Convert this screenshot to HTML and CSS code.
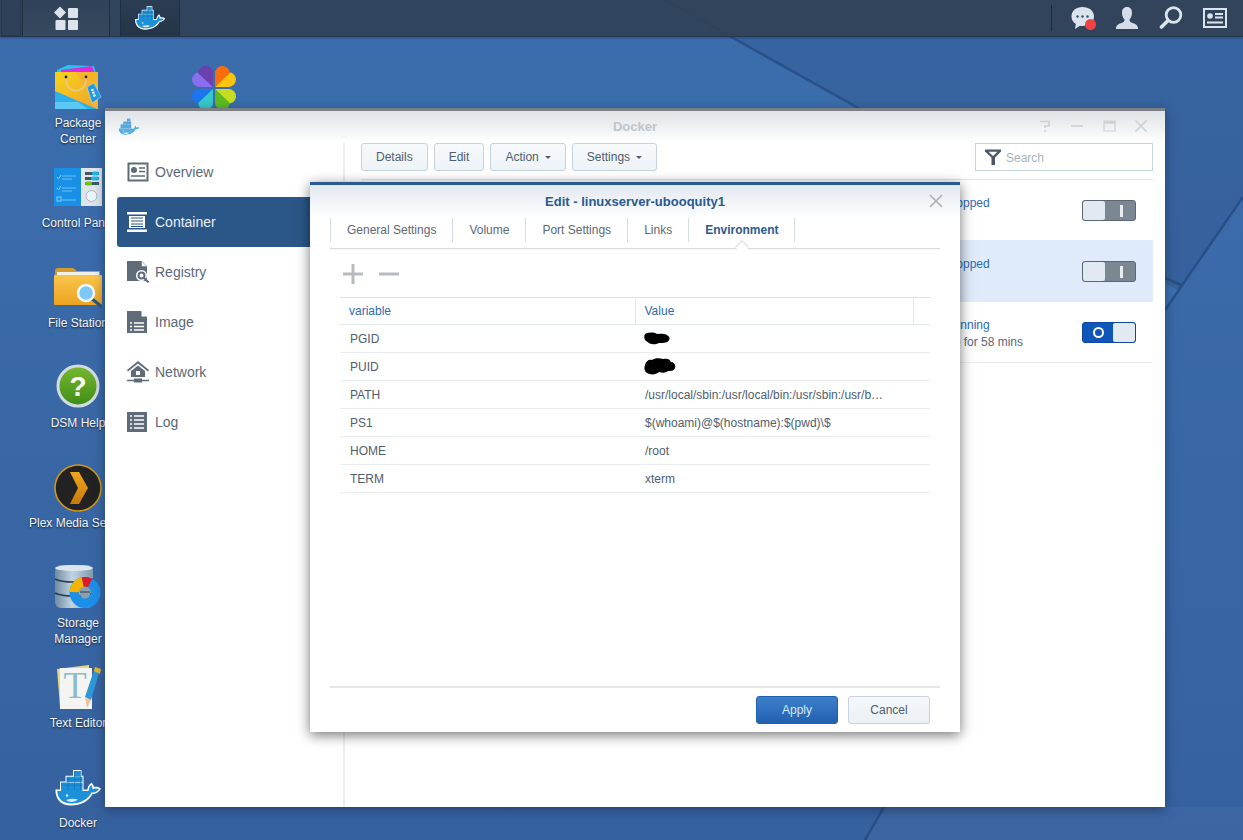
FILE: index.html
```html
<!DOCTYPE html>
<html lang="en">
<head>
<meta charset="utf-8">
<title>Docker - DSM</title>
<link rel="stylesheet" href="styles.css">
</head>
<body>
<svg class="defs" width="0" height="0" aria-hidden="true">
  <defs>
    <linearGradient id="bagY" x1="0" y1="0" x2="1" y2="1"><stop offset="0" stop-color="#f7d31c"/><stop offset="1" stop-color="#f2a22b"/></linearGradient>
    <linearGradient id="fold" x1="0" y1="0" x2="0" y2="1"><stop offset="0" stop-color="#f8c64c"/><stop offset="1" stop-color="#eda321"/></linearGradient>
    <linearGradient id="grn" x1="0" y1="0" x2="0" y2="1"><stop offset="0" stop-color="#77b82f"/><stop offset="1" stop-color="#3f8d16"/></linearGradient>
    <linearGradient id="cyl" x1="0" y1="0" x2="1" y2="0"><stop offset="0" stop-color="#6d8ba3"/><stop offset=".45" stop-color="#c3d4e0"/><stop offset="1" stop-color="#7f9bb0"/></linearGradient>
    <linearGradient id="chev" x1="0" y1="0" x2="0" y2="1"><stop offset="0" stop-color="#f0a51e"/><stop offset="1" stop-color="#c87a0c"/></linearGradient>
    <symbol id="whale" viewBox="0 0 48 36">
      <path d="M7 12.5 H28.5 V19.800 H7 Z M12.500 6.800 H28.500 V12 H12.500 Z M20 1 H26.500 V6.500 H20 Z" fill="#fff" stroke="#fff" stroke-width="2"/>
      <path d="M1.500 19.500 H33.500 C34 15 36.500 13.500 37.800 12.500 C39 14.500 39.800 15.800 40 17 C42.500 16.500 45 16.800 47 18.500 C45 22.500 41.500 24 38.500 24 C35 31 27 35.500 17 35.500 C6 35.500 1 28 1.500 19.500 Z" fill="#fff"/>
      <path d="M3.300 21 H34.500 C35 17.500 36.200 16 37.300 15 C38 16.500 38.600 18 38.600 19.200 C40.800 18.300 43 18.400 44.800 19.300 C43 21.800 40.200 22.800 37.500 22.600 C34.200 29.500 26.500 33.500 17.500 33.500 C8.500 33.500 3.300 28 3.300 21 Z" fill="#1c90d8"/>
      <path d="M7 12.500 H28.500 V21 H7 Z M12.500 6.800 H28.500 V12 H12.500 Z M20 1 H26.500 V6.500 H20 Z" fill="#1c90d8"/>
      <path d="M7 15.200 H28.500 M12.500 9.400 H28.500 M14 7 V20 M20.500 1 V20 M26.500 1 V20" stroke="#0f6fae" stroke-width=".5" fill="none"/>
      <path d="M12 30 C16 28.500 20 28.500 24 29.500 C21 32.500 15 32.800 12 30 Z" fill="#cfeaf8"/>
      <circle cx="13" cy="25.500" r="1.200" fill="#e8f6fd"/>
    </symbol>
  </defs>
</svg>

<div class="desktop">
  <svg class="wallpaper" viewBox="0 0 1243 840" aria-hidden="true">
    <path d="M665 0 H1243 V197 L1166 308 L1165 278 V108 H860 Z" class="wp-shade"/>
    <path d="M884 807 H1243 V840 H865 Z" class="wp-lift"/>
    <path d="M1165 283 L1178 290 L1165 310 Z" class="wp-patch"/>
    <path d="M665 0 L860 109" class="wp-line"/>
    <path d="M1243 197 L1165 310" class="wp-line"/>
    <path d="M1165 278 L1181 285" class="wp-line"/>
    <path d="M884 807 L865 840" class="wp-line"/>
  </svg>

  <header class="taskbar">
    <div class="tb-stub"></div>
    <button class="tb-btn tb-start" aria-label="Main menu">
      <svg width="26" height="24" viewBox="0 0 26 24">
        <path d="M7 0.500 L13 6.500 L7 12.500 L1 6.500 Z" fill="#dde3ea"/>
        <rect x="15" y="2" width="10" height="10" rx="1" fill="#dde3ea"/>
        <rect x="2.500" y="14" width="10" height="10" rx="1" fill="#dde3ea"/>
        <rect x="15" y="14" width="10" height="10" rx="1" fill="#dde3ea"/>
      </svg>
    </button>
    <button class="tb-btn tb-app" aria-label="Docker">
      <svg width="32" height="24"><use href="#whale"/></svg>
    </button>
    <div class="tb-spacer"></div>
    <div class="tb-sep"></div>
    <div class="tb-icons">
      <span class="tb-icon chat">
        <svg width="24" height="24" viewBox="0 0 24 24">
          <path d="M11.500 1 C18 1 23 4.800 23 10.500 C23 16 18 20 11.500 20 C10.500 20 9.700 20 9 19.800 L4 23 L4.800 18 C2 16.300 0.500 13.700 0.500 10.500 C0.500 4.800 5 1 11.500 1 Z" fill="#dbe3ec"/>
          <circle cx="6.500" cy="10.500" r="1.200" fill="#3a4e68"/><circle cx="11.500" cy="10.500" r="1.200" fill="#3a4e68"/><circle cx="16.500" cy="10.500" r="1.200" fill="#3a4e68"/>
        </svg>
        <span class="badge"></span>
      </span>
      <svg class="tb-icon" width="24" height="24" viewBox="0 0 24 24">
        <path d="M12 1 C15.500 1 17 3.500 17 7 C17 10 15.500 12.500 14.500 13.500 C14.500 15 15 16 17 16.800 C20 18 22.500 18.800 23 22 V23 H1 V22 C1.500 18.800 4 18 7 16.800 C9 16 9.500 15 9.500 13.500 C8.500 12.500 7 10 7 7 C7 3.500 8.500 1 12 1 Z" fill="#d5deE8"/>
      </svg>
      <svg class="tb-icon" width="24" height="24" viewBox="0 0 24 24">
        <circle cx="14.500" cy="9" r="7.300" fill="none" stroke="#dbe3ec" stroke-width="2.800"/>
        <path d="M9 14.500 L2.500 21" stroke="#dbe3ec" stroke-width="3.600" stroke-linecap="round"/>
      </svg>
      <svg class="tb-icon" width="24" height="20" viewBox="0 0 24 20">
        <rect x="1" y="1" width="22" height="18" fill="none" stroke="#dbe3ec" stroke-width="2"/>
        <circle cx="7" cy="8" r="2.800" fill="#dbe3ec"/>
        <path d="M12 6 H20 M12 9.500 H20 M4 14.500 H20" stroke="#dbe3ec" stroke-width="2"/>
      </svg>
    </div>
  </header>

  <nav class="shortcuts">
    <a class="shortcut">
      <span class="sc-icon">
        <svg width="48" height="48" viewBox="0 0 48 48">
          <path d="M3 6 L14 1 L40 2 L42 9 H3 Z" fill="#2bc0ee"/>
          <path d="M7 6 L38 2 L40 8 H7 Z" fill="#e02adf"/>
          <rect x="1" y="8" width="43" height="37" fill="url(#bagY)"/>
          <path d="M22 8 H44 V45 H40 Z" fill="#f5b42a"/>
          <path d="M1 27 L43 45 H1 Z" fill="#2eb0ee"/>
          <path d="M1 38 L24 38 L34 45 H1 Z" fill="#5cc8f4"/>
          <path d="M12 14 C11 31 33 31 32 14" fill="none" stroke="#e9c98b" stroke-width="1.600"/>
          <circle cx="12" cy="13" r="1.400" fill="#222"/><circle cx="32" cy="13" r="1.400" fill="#222"/>
          <path d="M33 23 L40 19 L47 33 L38 39 Z" fill="#1f9ae0" stroke="#cfeaf8" stroke-width=".5"/>
          <path d="M38 25 L41 33" stroke="#fff" stroke-width="2.500" stroke-dasharray="2 1"/>
        </svg>
      </span>
      <span class="sc-label">Package<br>Center</span>
    </a>
    <a class="shortcut">
      <span class="sc-icon">
        <svg width="48" height="48" viewBox="0 0 48 48">
          <rect y="4" width="27" height="38" fill="#1a8fe6"/>
          <rect x="27" y="4" width="21" height="38" fill="#dfe5ea"/>
          <path d="M8 12 H22 M8 15 H18 M8 24 H22 M8 27 H18 M8 36 H22" stroke="#68c6f6" stroke-width="1.200"/>
          <path d="M3 13 L4.500 15 L7 11 M3 24 L4.500 26 L7 22" stroke="#7ed4f8" stroke-width="1" fill="none"/>
          <rect x="3" y="33" width="4" height="4" fill="none" stroke="#7ed4f8"/>
          <rect x="31" y="8" width="14" height="3" fill="#435663"/><rect x="38" y="7.500" width="7" height="4" rx="2" fill="#19b8ef"/>
          <rect x="31" y="13" width="14" height="3" fill="#435663"/><rect x="37" y="12.500" width="8" height="4" rx="2" fill="#19b8ef"/>
          <rect x="31" y="18" width="14" height="3" fill="#435663"/><rect x="31" y="17.500" width="7" height="4" rx="2" fill="#6cc617"/>
          <circle cx="37.500" cy="32" r="5.500" fill="#eaf4fb" stroke="#aab5be"/>
        </svg>
      </span>
      <span class="sc-label">Control Panel</span>
    </a>
    <a class="shortcut">
      <span class="sc-icon">
        <svg width="48" height="48" viewBox="0 0 48 48">
          <path d="M1 7 C1 5 2 4 4 4 H19 L23 7 H46 V20 H1 Z" fill="#d39a2e"/>
          <rect x="3" y="8" width="42" height="3" fill="#f0efe8"/>
          <rect y="11" width="48" height="30" rx="1" fill="url(#fold)"/>
          <path d="M37 34 L48 43" stroke="#25587f" stroke-width="3"/>
          <circle cx="32" cy="29" r="8" fill="#7cc9f8" stroke="#f4f7f9" stroke-width="2.500"/>
        </svg>
      </span>
      <span class="sc-label">File Station</span>
    </a>
    <a class="shortcut">
      <span class="sc-icon sc-help">
        <svg width="48" height="48" viewBox="0 0 48 48">
          <circle cx="24" cy="24" r="20" fill="url(#grn)" stroke="#d2dae2" stroke-width="3"/>
          <text x="24" y="34" class="help-mark">?</text>
        </svg>
      </span>
      <span class="sc-label">DSM Help</span>
    </a>
    <a class="shortcut">
      <span class="sc-icon">
        <svg width="48" height="48" viewBox="0 0 48 48">
          <circle cx="24" cy="24" r="23" fill="#222" stroke="#d69513" stroke-width="1.600"/>
          <path d="M16 8 H25 L34 24 L25 40 H16 L24 24 Z" fill="url(#chev)"/>
        </svg>
      </span>
      <span class="sc-label">Plex Media Server</span>
    </a>
    <a class="shortcut">
      <span class="sc-icon">
        <svg width="48" height="48" viewBox="0 0 48 48">
          <rect x="1" y="1" width="38" height="43" rx="6" fill="url(#cyl)"/>
          <ellipse cx="20" cy="4" rx="19" ry="3" fill="#dbe6ee"/>
          <path d="M1 15 C8 19 32 19 39 15 M1 29 C8 33 32 33 39 29" stroke="#2d3f4f" stroke-width="1.600" fill="none"/>
          <circle cx="31" cy="28.500" r="5.500" fill="#8a9fb0"/>
          <path d="M26 28 H36" stroke="#2d3f4f" stroke-width="1"/>
          <circle cx="31" cy="28.500" r="10.750" fill="none" stroke="#1c8fe8" stroke-width="9.500"/>
          <path d="M20.300 28.100 A10.750 10.750 0 0 1 28.800 18" fill="none" stroke="#f5b400" stroke-width="9.500"/>
          <path d="M28.800 18 A10.750 10.750 0 0 1 36 19" fill="none" stroke="#e11a2b" stroke-width="9.500"/>
        </svg>
      </span>
      <span class="sc-label">Storage<br>Manager</span>
    </a>
    <a class="shortcut">
      <span class="sc-icon">
        <svg width="48" height="48" viewBox="0 0 48 48">
          <path d="M3 5 L35 1 V40 L6 43 Z" fill="#e6d78b"/>
          <rect x="6" y="4" width="32" height="41" fill="#f4f4f2"/>
          <text x="21" y="34" class="editor-mark">T</text>
          <path d="M41 3 L46 5.500 L37 36 L31 33 Z" fill="#2e97d6"/>
          <path d="M41 3 L47 5 L46 10 L40 7 Z" fill="#efb324"/>
          <path d="M31 33 L37 36 L33 44 Z" fill="#eec49a"/>
        </svg>
      </span>
      <span class="sc-label">Text Editor</span>
    </a>
    <a class="shortcut">
      <span class="sc-icon">
        <svg width="48" height="36"><use href="#whale"/></svg>
      </span>
      <span class="sc-label">Docker</span>
    </a>
    <a class="shortcut shortcut-photo">
      <span class="sc-icon">
        <svg width="44" height="44" viewBox="0 0 42 42">
          <path d="M20 20 H7 a7 7 0 0 1 0 -14 Z" fill="#8a6ef0"/>
          <path d="M20 20 V7 a7 7 0 0 0 -14 0 Z" fill="#6a3fb0"/>
          <path d="M22 20 H35 a7 7 0 0 0 0 -14 Z" fill="#fdc40f"/>
          <path d="M22 20 V7 a7 7 0 0 1 14 0 Z" fill="#fb6d0c"/>
          <path d="M20 22 H7 a7 7 0 0 0 0 14 Z" fill="#1b76ef"/>
          <path d="M20 22 V35 a7 7 0 0 1 -14 0 Z" fill="#36c9c9"/>
          <path d="M22 22 H35 a7 7 0 0 1 0 14 Z" fill="#c6dd22"/>
          <path d="M22 22 V35 a7 7 0 0 0 14 0 Z" fill="#5cbb21"/>
        </svg>
      </span>
    </a>
  </nav>

  <section class="window">
    <div class="win-head">
      <svg class="win-logo" width="24" height="18"><use href="#whale"/></svg>
      <span class="win-title">Docker</span>
      <div class="win-controls">
        <svg width="14" height="14" viewBox="0 0 14 14"><path d="M2 2.500 H11 V7 H7 V9 M7 11 V13" fill="none" stroke="#ccd0d4" stroke-width="1.600"/></svg>
        <svg width="14" height="14" viewBox="0 0 14 14"><path d="M1 7 H13" stroke="#ccd0d4" stroke-width="1.600"/></svg>
        <svg width="14" height="14" viewBox="0 0 14 14"><path d="M2 2 H13 V12 H2 Z" fill="none" stroke="#ccd0d4" stroke-width="1.200"/><path d="M2 3.500 H13" stroke="#ccd0d4" stroke-width="2.400"/></svg>
        <svg width="14" height="14" viewBox="0 0 14 14"><path d="M1.500 1.500 L12.500 12.500 M12.500 1.500 L1.500 12.500" stroke="#ccd0d4" stroke-width="1.500"/></svg>
      </div>
    </div>
    <div class="win-body">
      <aside class="sidebar">
        <a class="side-item">
          <svg class="side-icon" width="22" height="20" viewBox="0 0 22 20"><rect x=".5" y=".5" width="21" height="19" fill="#5f6b78"/><rect x="2.500" y="2.500" width="17" height="15" fill="#fff"/><circle cx="7" cy="8" r="3" fill="#5f6b78"/><path d="M12 6 H18 M12 9.500 H18 M4 14 H18" stroke="#5f6b78" stroke-width="1.600"/></svg>
          <span>Overview</span>
        </a>
        <a class="side-item active">
          <svg class="side-icon" width="20" height="20" viewBox="0 0 20 20"><path d="M0 0 H20 V2.500 H0 Z M0 17.500 H20 V20 H0 Z M2 4 H18 V16 H2 Z" fill="#fff"/><path d="M4 6 H16 M4 9 H16 M4 12 H16 M4 14.500 H16" stroke="#2a5788" stroke-width="1"/></svg>
          <span>Container</span>
        </a>
        <a class="side-item">
          <svg class="side-icon" width="22" height="22" viewBox="0 0 22 22"><path d="M0 0 H14 L20 6 V20 H0 Z" fill="#5f6b78"/><path d="M14.500 0 L20 5.500 H14.500 Z" fill="#fff" stroke="#5f6b78" stroke-width=".5"/><circle cx="14.500" cy="14.500" r="5.500" fill="#fff"/><circle cx="14.500" cy="14.500" r="3" fill="none" stroke="#5f6b78" stroke-width="2"/><path d="M17 17 L21.500 21.500" stroke="#5f6b78" stroke-width="2"/></svg>
          <span>Registry</span>
        </a>
        <a class="side-item">
          <svg class="side-icon" width="20" height="22" viewBox="0 0 20 22"><path d="M0 0 H14 L20 6 V22 H0 Z" fill="#5f6b78"/><path d="M14.500 0 L20 5.500 H14.500 Z" fill="#fff"/><path d="M3 12 H5 M7 12 H17 M3 15.500 H5 M7 15.500 H17 M3 19 H5 M7 19 H17" stroke="#fff" stroke-width="1.600"/></svg>
          <span>Image</span>
        </a>
        <a class="side-item">
          <svg class="side-icon" width="22" height="22" viewBox="0 0 22 22"><path d="M11 0 L22 9 L21 10.500 L11 2.500 L1 10.500 L0 9 Z" fill="#5f6b78"/><path d="M4 10 L11 4.500 L18 10 V16 H4 Z" fill="#5f6b78"/><rect x="9" y="10" width="4" height="4" fill="#fff"/><path d="M0 19.500 H7 M15 19.500 H22" stroke="#5f6b78" stroke-width="1.600"/><rect x="7" y="17.500" width="8" height="4" fill="#5f6b78"/></svg>
          <span>Network</span>
        </a>
        <a class="side-item">
          <svg class="side-icon" width="20" height="20" viewBox="0 0 20 20"><rect width="20" height="20" fill="#5f6b78"/><path d="M3 4 H5 M7 4 H17 M3 8 H5 M7 8 H17 M3 12 H5 M7 12 H17 M3 16 H5 M7 16 H17" stroke="#fff" stroke-width="1.600"/></svg>
          <span>Log</span>
        </a>
      </aside>
      <main class="content">
        <div class="toolbar">
          <button class="btn">Details</button>
          <button class="btn">Edit</button>
          <button class="btn">Action<i class="caret"></i></button>
          <button class="btn">Settings<i class="caret"></i></button>
          <label class="search">
            <svg width="16" height="16" viewBox="0 0 16 16"><path d="M0 0.500 H16 V2.500 L10 8.500 V16 H6.500 V8.500 L0 2.500 Z" fill="#4b5765"/><path d="M3.500 2.800 H12.500 L8 7 Z" fill="#fff"/></svg>
            <span>Search</span>
          </label>
        </div>
        <div class="rows">
          <div class="row">
            <div class="status"><span class="st-name">Stopped</span></div>
            <div class="toggle off"><span class="knob"></span><span class="mark-i"></span></div>
          </div>
          <div class="row selected">
            <div class="status"><span class="st-name">Stopped</span></div>
            <div class="toggle off"><span class="knob"></span><span class="mark-i"></span></div>
          </div>
          <div class="row last">
            <div class="status"><span class="st-name">Running</span><span class="st-time">Up for 58 mins</span></div>
            <div class="toggle on"><span class="mark-o"></span><span class="knob"></span></div>
          </div>
        </div>
      </main>
    </div>
  </section>

  <section class="modal">
    <div class="modal-head">
      <h1>Edit - linuxserver-ubooquity1</h1>
      <svg class="modal-close" width="14" height="14" viewBox="0 0 14 14"><path d="M1 1 L13 13 M13 1 L1 13" stroke="#aab0b6" stroke-width="1.700"/></svg>
    </div>
    <div class="tabs">
      <a class="tab">General Settings</a>
      <a class="tab">Volume</a>
      <a class="tab">Port Settings</a>
      <a class="tab">Links</a>
      <a class="tab current">Environment</a>
    </div>
    <div class="tools">
      <svg width="20" height="20" viewBox="0 0 20 20"><path d="M8.500 0 H11.500 V8.500 H20 V11.500 H11.500 V20 H8.500 V11.500 H0 V8.500 H8.500 Z" fill="#b7bbc0"/></svg>
      <svg width="20" height="20" viewBox="0 0 20 20"><rect y="8.500" width="20" height="3" fill="#b7bbc0"/></svg>
    </div>
    <div class="table-wrap">
      <table class="env">
        <colgroup><col class="c1"><col class="c2"><col class="c3"></colgroup>
        <thead><tr><th>variable</th><th>Value</th><th></th></tr></thead>
        <tbody>
          <tr><td>PGID</td><td colspan="2"><svg class="scrib" width="26" height="13" viewBox="0 0 26 13"><path d="M0.500 3 C2 0 10 0 13 2 C18 1 25 2 25.500 6 C26 11 19 11 15 11 C10 13.500 5 12 3 9.500 C0 8 0 5 0.500 3 Z" fill="#000"/></svg></td></tr>
          <tr><td>PUID</td><td colspan="2"><svg class="scrib" width="32" height="17" viewBox="0 0 32 17"><path d="M1 7 C2 3 5 1 8 2 C11 -0.500 16 0 19 1 C23 0 26 1 27 4 C30 4 32 7 31 10 C30 13 27 13 24 13 C22 15 18 15 15 14 C12 17 6 17 3 15 C0 13 0 10 1 7 Z" fill="#000"/></svg></td></tr>
          <tr><td>PATH</td><td colspan="2">/usr/local/sbin:/usr/local/bin:/usr/sbin:/usr/b…</td></tr>
          <tr><td>PS1</td><td colspan="2">$(whoami)@$(hostname):$(pwd)\$</td></tr>
          <tr><td>HOME</td><td colspan="2">/root</td></tr>
          <tr><td>TERM</td><td colspan="2">xterm</td></tr>
        </tbody>
      </table>
    </div>
    <div class="modal-foot">
      <button class="fbtn primary">Apply</button>
      <button class="fbtn">Cancel</button>
    </div>
  </section>
</div>
</body>
</html>
```

FILE: styles.css
```css
* { box-sizing: border-box; }
html, body { margin: 0; padding: 0; }
body { font-family: "Liberation Sans", Arial, sans-serif; font-size: 12px; color: #505d6d; overflow: hidden; }
button { font-family: inherit; }
.defs { position: absolute; }

.desktop {
  position: relative;
  width: 1243px;
  height: 840px;
  overflow: hidden;
  background-color: #3a69a8;
  background-image: linear-gradient(180deg, #3b6dad 0%, #3a69a8 40%, #36619f 100%);
}
.wallpaper { position: absolute; inset: 0; width: 1243px; height: 840px; }
.wp-shade { fill: rgba(40, 60, 100, .18); }
.wp-lift { fill: rgba(255, 255, 255, .03); }
.wp-patch { fill: #3d70b0; }
.wp-line { fill: none; stroke: rgba(30, 65, 115, .6); stroke-width: 2.500; }

/* taskbar */
.taskbar {
  position: relative;
  display: flex;
  align-items: stretch;
  height: 37px;
  background: rgba(49, 65, 86, .92);
  border-bottom: 1px solid #26384f;
  box-shadow: 0 1px 2px rgba(20, 40, 70, .4);
}
.tb-stub { width: 20px; margin: 0 1px; background: #2e4159; border: 1px solid #26374c; border-top: 0; }
.tb-btn { padding: 0; border: 0; display: flex; align-items: center; justify-content: center; cursor: pointer; }
.tb-start { width: 88px; background: linear-gradient(180deg, #2f4259, #36495f); border-left: 1px solid #1f2e40; border-right: 1px solid #1f2e40; }
.tb-app { width: 60px; margin-left: 10px; background: linear-gradient(180deg, #2b3d54, #243448); border-left: 1px solid #1f2e40; border-right: 1px solid #1f2e40; }
.tb-spacer { flex: 1; }
.tb-sep { width: 1px; margin: 5px 0; background: #1d2b3c; }
.tb-icons { display: flex; align-items: center; gap: 20px; padding: 0 16px 0 19px; }
.tb-icon { position: relative; display: block; width: 24px; height: 24px; }
.badge { position: absolute; right: -1px; bottom: 0; width: 11px; height: 11px; border-radius: 50%; background: #f04343; }

/* desktop shortcuts */
.shortcuts {
  position: absolute;
  left: 18px;
  top: 50px;
  display: grid;
  grid-template-columns: 120px 120px;
  grid-template-rows: repeat(8, 100px);
  grid-auto-flow: column;
  column-gap: 16px;
}
.shortcut { display: flex; flex-direction: column; align-items: center; padding-top: 14px; }
.shortcut-photo { grid-column: 2; grid-row: 1; }
.sc-icon { display: flex; align-items: center; justify-content: center; height: 48px; }
.sc-help { margin-top: -2px; margin-bottom: 2px; }
.sc-label {
  margin-top: 3px;
  color: #f2f5f8;
  font-size: 12px;
  line-height: 16px;
  text-align: center;
  white-space: nowrap;
  text-shadow: 0 1px 2px rgba(0, 0, 0, .7);
}
.help-mark { font-family: "Liberation Sans", Arial, sans-serif; font-weight: 700; font-size: 28px; fill: #fff; text-anchor: middle; }
.editor-mark { font-family: "Liberation Serif", serif; font-size: 38px; fill: #8fbccd; text-anchor: middle; }

/* app window */
.window {
  position: absolute;
  left: 105px;
  top: 108px;
  width: 1060px;
  height: 699px;
  display: flex;
  flex-direction: column;
  background: #fff;
  border-top: 3px solid #7a8086;
  box-shadow: 0 3px 10px rgba(20, 40, 70, .55);
}
.win-head {
  position: relative;
  display: flex;
  align-items: center;
  justify-content: center;
  height: 32px;
  flex: none;
  padding-bottom: 2px;
  background: linear-gradient(180deg, #dfe2e6, #fff);
}
.win-logo { position: absolute; left: 12px; top: 7px; opacity: .7; }
.win-title { color: #c0c5ca; font-weight: 700; font-size: 13px; }
.win-controls { position: absolute; right: 17px; top: 8px; display: flex; gap: 18px; }
.win-body { display: flex; flex: 1; min-height: 0; }
.sidebar { width: 240px; padding: 4px 12px 0; border-right: 2px solid #eceef0; flex: none; }
.side-item {
  position: relative;
  display: flex;
  align-items: center;
  height: 50px;
  padding-left: 38px;
  font-size: 14px;
  color: #5c6875;
  border-radius: 3px;
}
.side-item.active { background: #2a5788; color: #e9eff6; }
.side-icon { position: absolute; left: 10px; top: 50%; transform: translateY(-50%); }
.content { flex: 1; padding: 0 12px 0 16px; min-width: 0; }
.toolbar { display: flex; align-items: flex-start; gap: 6px; height: 37px; border-bottom: 1px solid #dfe4ea; }
.btn {
  height: 28px;
  padding: 0 14px;
  border: 1px solid #c6d2de;
  border-radius: 3px;
  background: linear-gradient(180deg, #f7fafc, #eef3f8);
  color: #505d6d;
  font-size: 12px;
  line-height: 26px;
}
.caret { display: inline-block; margin-left: 6px; vertical-align: 2px; border: 3px solid transparent; border-top-color: #505d6d; border-bottom: 0; width: 0; height: 0; border-left-width: 3.500px; border-right-width: 3.500px; }
.search {
  display: flex;
  align-items: center;
  gap: 5px;
  width: 178px;
  height: 28px;
  margin-left: auto;
  padding-left: 9px;
  border: 1px solid #c6d2de;
  color: #a9b4c0;
}
.search span { padding-top: 2px; }
.rows { display: flex; flex-direction: column; }
.row {
  display: flex;
  align-items: flex-start;
  height: 60px;
  padding-left: 584px;
}
.row.selected { background: #dfeafa; height: 62px; padding-top: 1px; }
.row.last { height: 61px; border-bottom: 1px solid #eceff2; }
.status { width: 137px; display: flex; flex-direction: column; padding-top: 15px; line-height: 16px; }
.st-name { color: #2e6cb0; margin-bottom: 0; }
.st-time { color: #5c6875; margin-top: 1px; }
.toggle {
  display: flex;
  width: 54px;
  height: 21px;
  margin-top: 20px;
  border-radius: 3px;
  overflow: hidden;
  align-items: center;
}
.toggle.off { background: #7b8792; border: 1px solid #5b6670; }
.toggle.on { background: #0f56b9; border: 1px solid #0f47a0; justify-content: space-between; }
.knob { width: 22px; height: 19px; background: #e3e9f1; border-radius: 2px; flex: none; }
.mark-i { width: 3px; height: 12px; margin-left: 15px; background: #e9edf1; }
.mark-o { width: 11px; height: 11px; margin-left: 10px; border: 2px solid #fff; border-radius: 50%; }

/* modal dialog */
.modal {
  position: absolute;
  left: 310px;
  top: 182px;
  width: 650px;
  height: 550px;
  display: flex;
  flex-direction: column;
  background: #fff;
  border-top: 3px solid #2a5a8f;
  box-shadow: 0 3px 12px rgba(0, 0, 0, .55);
}
.modal-head {
  position: relative;
  height: 33px;
  flex: none;
  display: flex;
  align-items: center;
  justify-content: center;
  background: linear-gradient(180deg, #e2e8f0, #fff);
}
.modal-head h1 { margin: 0; font-size: 13px; font-weight: 700; color: #2a5a8f; }
.modal-close { position: absolute; right: 17px; top: 9px; }
.tabs {
  position: relative;
  display: flex;
  height: 31px;
  margin: 0 20px;
  padding-bottom: 6px;
  border-bottom: 1px solid #d9dcdf;
  box-shadow: 0 1px 1px rgba(0, 0, 0, .03);
  flex: none;
}
.tab {
  position: relative;
  display: flex;
  align-items: center;
  padding: 0 16px;
  border-left: 1px solid #d3dde7;
  color: #5c6875;
}
.tab.current { color: #2a5a8f; font-weight: 700; border-right: 1px solid #d3dde7; }
.tab.current::after {
  content: "";
  position: absolute;
  left: 50%;
  bottom: -10px;
  width: 9px;
  height: 9px;
  margin-left: -5px;
  background: #fff;
  border-left: 1px solid #d9dcdf;
  border-top: 1px solid #d9dcdf;
  transform: rotate(45deg);
}
.tools { display: flex; gap: 16px; padding: 15px 33px 0; height: 48px; flex: none; }
.table-wrap { flex: 1; margin: 0 30px; min-height: 0; }
.env { width: 590px; border-collapse: collapse; table-layout: fixed; }
.c1 { width: 295px; }
.c2 { width: 278px; }
.c3 { width: 17px; }
.env th {
  height: 27px;
  padding: 0 8px 0 9px;
  text-align: left;
  font-weight: 400;
  color: #2e6cb0;
  border-top: 1px solid #d8e0e8;
  border-bottom: 1px solid #e3e9ef;
  border-right: 1px solid #e3e9ef;
}
.env th:last-child { border-right: 0; }
.env td {
  height: 28px;
  padding: 0 10px;
  border-bottom: 1px solid #e9edf1;
  color: #505d6d;
  white-space: nowrap;
}
.scrib { display: block; margin-left: -1px; }
.modal-foot {
  display: flex;
  justify-content: flex-end;
  gap: 10px;
  height: 46px;
  margin: 0 20px;
  padding: 8px 10px 0 0;
  border-top: 2px solid #e6e7e8;
  flex: none;
}
.fbtn {
  width: 82px;
  height: 28px;
  border: 1px solid #c6d2de;
  border-radius: 3px;
  background: linear-gradient(180deg, #f5f8fb, #ebf0f5);
  color: #505d6d;
  font-size: 12px;
}
.fbtn.primary { background: linear-gradient(180deg, #3e7fcc, #2160ae); border-color: #2160ae; color: #dbe9f8; }
```
